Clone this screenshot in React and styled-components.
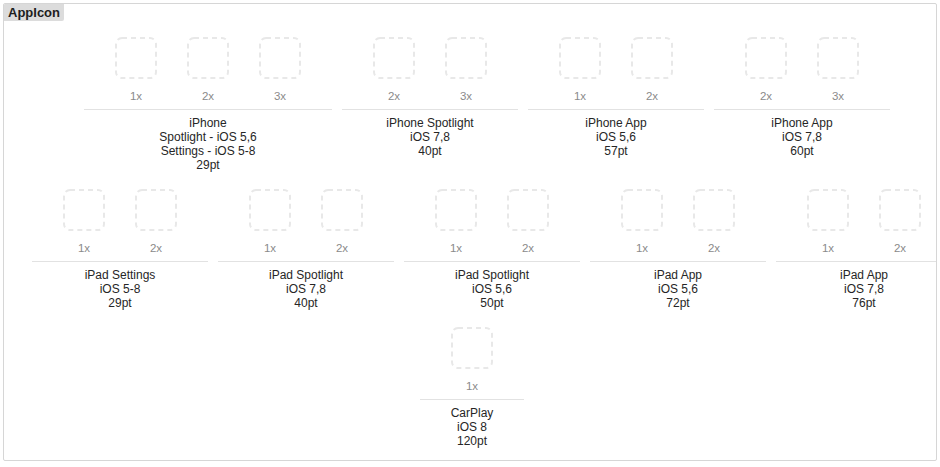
import styled, { createGlobalStyle } from "styled-components";

const GlobalStyle = createGlobalStyle`
  html, body {
    margin: 0;
    padding: 0;
    background: #ffffff;
  }
  body {
    font-family: "Liberation Sans", Arial, sans-serif;
  }
`;

const Panel = styled.div`
  box-sizing: border-box;
  margin: 3px;
  width: 934px;
  height: 458px;
  border: 1px solid #d6d6d6;
  border-radius: 2px;
  overflow: hidden;
  display: flex;
  flex-direction: column;
`;

const Title = styled.div`
  align-self: flex-start;
  height: 17px;
  line-height: 17px;
  padding: 0 4px 0 4px;
  background: #dcdcdc;
  border-bottom-right-radius: 2px;
  font-size: 13px;
  font-weight: bold;
  color: #1e1e1e;
`;

const Row = styled.div`
  display: flex;
  align-items: flex-start;
  gap: 10px;
  padding-left: ${(p) => p.$offset}px;
  margin-top: ${(p) => p.$top}px;
`;

const Group = styled.div`
  flex: none;
  display: flex;
  flex-direction: column;
`;

const Slots = styled.div`
  display: flex;
  padding: 0 16px 6px;
`;

const Slot = styled.div`
  width: 72px;
  display: flex;
  flex-direction: column;
  align-items: center;
`;

const Well = styled.svg`
  display: block;
  width: 42px;
  height: 42px;
  margin-bottom: 10px;
`;

const Scale = styled.div`
  font-size: 11.5px;
  line-height: 14px;
  color: #8a8a8a;
`;

const Info = styled.div`
  border-top: 1px solid #e2e2e2;
  padding-top: 6px;
  text-align: center;
  font-size: 12px;
  line-height: 14px;
  color: #262626;
`;

const rows = [
  {
    offset: 80,
    top: 16,
    groups: [
      { scales: ["1x", "2x", "3x"], lines: ["iPhone", "Spotlight - iOS 5,6", "Settings - iOS 5-8", "29pt"] },
      { scales: ["2x", "3x"], lines: ["iPhone Spotlight", "iOS 7,8", "40pt"] },
      { scales: ["1x", "2x"], lines: ["iPhone App", "iOS 5,6", "57pt"] },
      { scales: ["2x", "3x"], lines: ["iPhone App", "iOS 7,8", "60pt"] },
    ],
  },
  {
    offset: 28,
    top: 17,
    groups: [
      { scales: ["1x", "2x"], lines: ["iPad Settings", "iOS 5-8", "29pt"] },
      { scales: ["1x", "2x"], lines: ["iPad Spotlight", "iOS 7,8", "40pt"] },
      { scales: ["1x", "2x"], lines: ["iPad Spotlight", "iOS 5,6", "50pt"] },
      { scales: ["1x", "2x"], lines: ["iPad App", "iOS 5,6", "72pt"] },
      { scales: ["1x", "2x"], lines: ["iPad App", "iOS 7,8", "76pt"] },
    ],
  },
  {
    offset: 416,
    top: 17,
    groups: [{ scales: ["1x"], lines: ["CarPlay", "iOS 8", "120pt"] }],
  },
];

const IconWell = () => (
  <Well viewBox="0 0 42 42">
    <rect
      x="1"
      y="1"
      width="40"
      height="40"
      rx="6"
      fill="none"
      stroke="#e8e8e8"
      strokeWidth="2"
      strokeDasharray="5 4"
    />
  </Well>
);

export default function App() {
  return (
    <>
      <GlobalStyle />
      <Panel>
        <Title>AppIcon</Title>
        {rows.map((row, i) => (
          <Row key={i} $offset={row.offset} $top={row.top}>
            {row.groups.map((g, j) => (
              <Group key={j}>
                <Slots>
                  {g.scales.map((s) => (
                    <Slot key={s}>
                      <IconWell />
                      <Scale>{s}</Scale>
                    </Slot>
                  ))}
                </Slots>
                <Info>
                  {g.lines.map((l) => (
                    <div key={l}>{l}</div>
                  ))}
                </Info>
              </Group>
            ))}
          </Row>
        ))}
      </Panel>
    </>
  );
}
